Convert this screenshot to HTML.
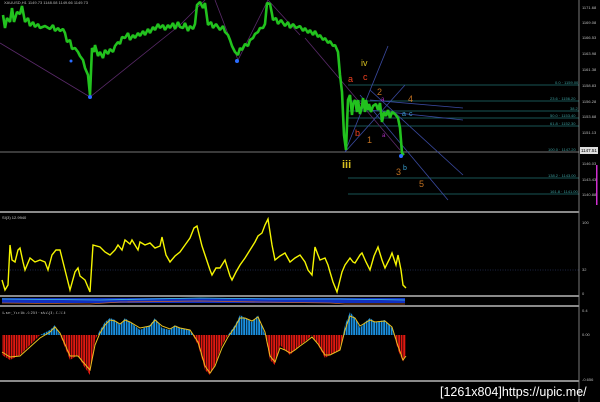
<!DOCTYPE html>
<html><head><style>
html,body{margin:0;padding:0;background:#000;width:600px;height:402px;overflow:hidden}
svg{display:block}
text{font-family:"Liberation Sans",sans-serif}
</style></head><body>
<svg width="600" height="402" viewBox="0 0 600 402">
<defs>
<clipPath id="up"><rect x="0" y="305" width="580" height="30"/></clipPath>
<clipPath id="dn"><rect x="0" y="335" width="580" height="50"/></clipPath>
<pattern id="gap" width="2.5" height="10" patternUnits="userSpaceOnUse"><rect width="0.7" height="10" fill="#000"/></pattern>
</defs>
<rect width="600" height="402" fill="#000"/>
<line x1="0" y1="152" x2="579" y2="152" fill="none" stroke="#9a9a9a" stroke-width="0.8"/>
<g stroke="#1f6f70" stroke-width="0.8">
<line x1="348" y1="85" x2="579" y2="85"/><line x1="348" y1="101" x2="579" y2="101"/>
<line x1="348" y1="111" x2="579" y2="111"/><line x1="348" y1="118" x2="579" y2="118"/>
<line x1="348" y1="126" x2="579" y2="126"/><line x1="348" y1="178" x2="579" y2="178"/>
<line x1="348" y1="194" x2="579" y2="194"/></g>
<g fill="#3a9a9a" font-size="4"><text x="555" y="84">0.0 · 1159.00</text><text x="550" y="100">23.6 · 1156.20</text><text x="570" y="110">38.2</text><text x="550" y="117">50.0 · 1153.40</text><text x="550" y="125">61.8 · 1152.30</text><text x="548" y="151">100.0 · 1147.20</text><text x="548" y="177">138.2 · 1143.00</text><text x="550" y="193">161.8 · 1141.00</text></g>
<g stroke="#5a2a6a" stroke-width="0.8" fill="none">
<polyline points="0,43 90,97 180,25 205,0"/><polyline points="215,0 238,60 268,0 300,35"/>
<line x1="305" y1="38" x2="400" y2="150"/></g>
<g stroke="#3a4aa0" stroke-width="0.8" fill="none">
<line x1="345" y1="152" x2="388" y2="46"/><line x1="345" y1="152" x2="405" y2="85"/>
<line x1="370" y1="90" x2="463" y2="175"/><line x1="360" y1="95" x2="448" y2="200"/>
<line x1="370" y1="100" x2="463" y2="108"/><line x1="370" y1="110" x2="463" y2="120"/></g>
<polyline fill="none" stroke="#22c21e" stroke-width="2.6" stroke-linejoin="bevel" points="3,15 5,28 7,18 10,22 12,8 14,22 17,12 20,14 22,6 25,22 28,18 30,26 33,22 35,27 38,24 40,28 45,26 50,29 53,25 55,31 58,28 60,31 63,29 65,33 67,42 70,40 72,49 75,48 78,52 80,56 83,60 85,68 88,75 90,95 92,48 94,52 95,45 98,56 100,52 103,58 105,50 108,54 110,49 113,52 115,46 118,42 120,44 122,37 125,38 128,33 130,40 133,35 135,38 138,33 140,36 143,31 145,35 148,29 150,33 153,27 155,30 158,24 160,28 163,25 165,30 168,25 170,28 173,23 175,29 178,22 180,27 183,28 185,23 188,31 190,26 193,29 195,24 197,5 200,2 203,8 205,3 208,25 211,22 213,28 216,24 220,30 223,26 225,32 228,35 230,40 232,46 235,52 238,55 240,48 242,50 245,44 248,46 250,40 253,38 255,34 258,32 260,28 263,28 265,24 267,3 270,4 272,14 273,20 276,18 278,24 281,20 285,26 288,22 290,28 293,24 296,28 300,26 303,31 305,28 308,33 310,30 313,35 315,31 318,37 320,35 323,40 325,38 328,43 330,41 333,46 335,45 338,52 340,75 342,92 344,135 346,150 348,100 350,95 352,115 353,104 355,100 357,112 358,100 360,114 362,106 363,98 365,112 366,100 368,110 369,104 371,112 373,106 376,104 378,110 380,103 382,122 384,112 386,116 388,110 390,118 392,112 395,114 398,118 400,128 402,153 404,155"/>
<g fill="#2a6cff"><circle cx="90" cy="97" r="2"/><circle cx="71" cy="61" r="1.5"/><circle cx="237" cy="61" r="2"/><circle cx="401" cy="156" r="2"/></g>
<g font-size="9" font-family="Liberation Sans,sans-serif">
<text x="361" y="66" fill="#d8c020">iv</text><text x="342" y="168" fill="#d8c020" font-size="11" font-weight="bold">iii</text>
<text x="348" y="82" fill="#f04020">a</text><text x="363" y="80" fill="#f04020">c</text><text x="355" y="136" fill="#f04020">b</text>
<text x="377" y="95" fill="#c07020">2</text><text x="408" y="102" fill="#c07020">4</text><text x="367" y="143" fill="#c07020">1</text>
<text x="396" y="175" fill="#c07020">3</text><text x="419" y="187" fill="#c07020">5</text>
<text x="402" y="116" fill="#3aa0d0" font-size="7">a</text><text x="409" y="116" fill="#3aa0d0" font-size="7">c</text>
<text x="403" y="170" fill="#3aa0d0" font-size="7">b</text>
<text x="381" y="101" fill="#b030c0" font-size="6">a</text><text x="382" y="137" fill="#b030c0" font-size="6">a</text></g>
<text x="4" y="4" fill="#bbb" font-size="4">XAUUSD,H1 1149.73 1148.08 1149.66 1149.73</text>
<line x1="579" y1="0" x2="579" y2="402" stroke="#ccc" stroke-width="0.6"/>
<g fill="#bbb" font-size="4"><text x="582" y="9">1171.68</text><text x="582" y="24">1169.08</text><text x="582" y="39">1166.53</text><text x="582" y="55">1163.98</text><text x="582" y="71">1161.38</text><text x="582" y="87">1158.83</text><text x="582" y="103">1156.28</text><text x="582" y="118">1153.68</text><text x="582" y="134">1151.13</text><text x="582" y="165">1146.03</text><text x="582" y="181">1143.43</text><text x="582" y="196">1140.88</text><text x="582" y="224">100</text><text x="582" y="271">32</text><text x="582" y="295">0</text><text x="582" y="312">0.4</text><text x="582" y="336">0.00</text><text x="582" y="381">-0.656</text></g>
<rect x="580" y="147" width="18" height="7" fill="#ddd"/><text x="581" y="152" fill="#000" font-size="4.5">1147.51</text>
<rect x="596" y="165" width="1.5" height="40" fill="#d030d0"/>
<g fill="#8a8a8a"><rect x="0" y="211" width="579" height="2"/><rect x="0" y="295" width="579" height="2"/><rect x="0" y="305" width="579" height="2"/><rect x="0" y="380" width="579" height="2"/></g>
<text x="2" y="219" fill="#ccc" font-size="4">SI(3) 12.9940</text>
<line x1="0" y1="270" x2="579" y2="270" stroke="#3a4a8a" stroke-width="0.6" stroke-dasharray="1,1.5"/>
<polyline fill="none" stroke="#f5f500" stroke-width="1.4" points="2,280 5,290 8,285 10,245 12,260 15,262 18,250 20,248 23,262 25,270 30,258 35,262 40,260 45,262 48,270 52,255 56,250 60,250 65,270 70,290 75,272 78,268 80,276 85,280 90,292 93,245 100,247 105,252 110,255 115,250 118,245 122,250 125,240 130,244 132,240 138,250 140,242 145,245 150,243 155,248 160,246 162,237 166,255 170,262 175,256 180,252 185,245 190,238 194,228 197,226 202,246 205,255 210,270 212,275 216,268 220,268 225,260 230,276 232,280 236,272 240,265 245,258 250,250 255,242 258,236 262,233 265,225 268,219 272,245 275,260 280,256 285,253 290,262 295,258 300,255 305,262 308,270 312,275 315,247 318,255 320,260 325,258 328,265 330,272 333,282 337,292 342,272 345,265 350,258 353,262 355,263 360,255 362,253 366,262 370,270 374,256 378,247 382,260 385,268 390,258 392,253 396,265 398,255 401,270 403,285 406,288"/>
<rect x="2" y="298" width="403" height="5" fill="#1030c0"/>
<polyline fill="none" stroke="#40c0e0" stroke-width="0.8" points="2,299 100,300 200,298 270,299 340,299 405,300"/>
<polyline fill="none" stroke="#c06030" stroke-width="0.8" points="2,303 90,304 120,302 200,301 260,302 330,303 345,304 405,304"/>
<text x="2" y="314" fill="#ccc" font-size="4">iUser_Yur4ik -0.259 · sMA(3) -0.316</text>
<g>
<polygon clip-path="url(#up)" fill="#1a90e0" points="2,335 2,355 10,360 20,355 30,345 40,335 50,330 55,325 60,335 70,360 78,355 83,365 90,375 95,340 100,330 105,322 110,318 115,320 120,325 125,318 130,322 140,330 150,325 155,318 162,328 170,330 175,325 180,328 190,330 198,345 205,370 210,375 215,365 222,345 228,335 235,325 240,315 245,318 252,322 258,315 265,335 270,360 275,365 280,345 285,350 290,355 295,350 300,345 307,340 312,335 318,345 325,358 330,355 340,350 345,325 350,312 355,318 360,328 365,322 370,318 375,322 385,320 392,328 398,350 403,362 406,355 406,335"/>
<polygon clip-path="url(#dn)" fill="#e01810" points="2,335 2,355 10,360 20,355 30,345 40,335 50,330 55,325 60,335 70,360 78,355 83,365 90,375 95,340 100,330 105,322 110,318 115,320 120,325 125,318 130,322 140,330 150,325 155,318 162,328 170,330 175,325 180,328 190,330 198,345 205,370 210,375 215,365 222,345 228,335 235,325 240,315 245,318 252,322 258,315 265,335 270,360 275,365 280,345 285,350 290,355 295,350 300,345 307,340 312,335 318,345 325,358 330,355 340,350 345,325 350,312 355,318 360,328 365,322 370,318 375,322 385,320 392,328 398,350 403,362 406,355 406,335"/>
<rect x="2" y="307" width="405" height="72" fill="url(#gap)"/>
<polyline fill="none" stroke="#e8c020" stroke-width="1" points="2,352 10,357 20,356 30,347 40,338 50,332 55,327 60,333 70,356 78,356 83,362 90,370 95,345 100,333 105,325 110,320 115,321 120,324 125,320 130,322 140,328 150,326 155,320 162,326 170,329 175,326 180,328 190,330 198,342 205,366 210,373 215,366 222,348 228,337 235,327 240,318 245,318 252,321 258,317 265,332 270,356 275,362 280,348 285,350 290,353 295,350 300,346 307,341 312,337 318,344 325,355 330,355 340,350 345,330 350,316 355,318 360,326 365,323 370,320 375,322 385,321 392,327 398,346 403,360 406,356"/>
</g>
<text x="440" y="396" fill="#fff" font-size="12.5" font-family="Liberation Sans,sans-serif">[1261x804]https://upic.me/</text>
</svg>
</body></html>
